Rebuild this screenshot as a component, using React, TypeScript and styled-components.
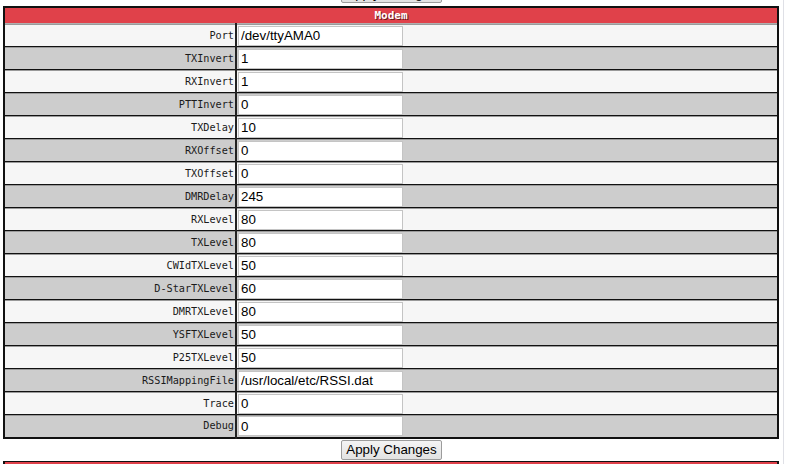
import React from 'react';
import styled, { createGlobalStyle } from 'styled-components';

const GlobalStyle = createGlobalStyle`
    html, body {
        margin: 0;
        padding: 0;
        background: #ffffff;
        overflow: hidden;
    }
`;

const Page = styled.div`
    width: 784px;
    height: 464px;
    border-right: 1px solid #dfe0e6;
    box-sizing: border-box;
    padding-left: 3px;
    overflow: hidden;
`;

const ButtonRow = styled.div<{ $top?: boolean }>`
    width: 776px;
    display: flex;
    justify-content: center;
    margin-top: ${p => (p.$top ? '-17px' : '1px')};
    margin-bottom: ${p => (p.$top ? '3px' : '0')};
`;

const Button = styled.button`
    font-family: "Liberation Sans", Arial, sans-serif;
    font-size: 13.33px;
    color: #000;
    height: 20px;
    width: 101px;
    padding: 0;
    white-space: nowrap;
    background: linear-gradient(#f4f4f4, #e2e2e2);
    border: 1px solid #9c9c9c;
    border-radius: 2px;
    box-sizing: border-box;
    margin-left: 1px;
`;

const Table = styled.table`
    width: 776px;
    border-collapse: collapse;
    border: 2px solid #111;
    font-family: "DejaVu Sans Mono", "Liberation Mono", monospace;
    font-size: 10.2px;
`;

const HeadCell = styled.th`
    background: #e0414a;
    color: #fff;
    font-weight: bold;
    height: 15px;
    padding: 0;
    text-align: center;
    text-shadow: 1px 1px 0 #6a1a1a;
    border-bottom: 1px solid #b0b0b0;
    font-size: 11px;
    line-height: 15px;
`;

const Row = styled.tr<{ $shade: boolean }>`
    background: ${p => (p.$shade ? '#cdcdcd' : '#f6f6f6')};
    height: 23px;
`;

const LabelCell = styled.td`
    width: 229px;
    text-align: right;
    padding: 0 1px 0 0;
    border-top: 1px solid #111;
    border-right: 2px solid #222;
    color: #1a1a1a;
    box-shadow: inset 0 1px 0 #9a9a9a;
`;

const ValueCell = styled.td`
    text-align: left;
    padding: 0 0 0 1px;
    border-top: 1px solid #111;
    box-shadow: inset 0 1px 0 #9a9a9a;
`;

const Field = styled.input`
    display: block;
    width: 165px;
    height: 20px;
    box-sizing: border-box;
    border: 1px solid #c4c4c4;
    background: #fff;
    padding: 1px 2px;
    font-family: "Liberation Sans", Arial, sans-serif;
    font-size: 13.33px;
    color: #000;
    margin: 1px 0 0 0;
`;

const NextTable = styled.div`
    width: 776px;
    box-sizing: border-box;
    height: 16px;
    margin-top: 1px;
    background: #e0414a;
    border: 2px solid #111;
    border-top-width: 1px;
    border-bottom: none;
`;

const settings: [string, string][] = [
    ['Port', '/dev/ttyAMA0'],
    ['TXInvert', '1'],
    ['RXInvert', '1'],
    ['PTTInvert', '0'],
    ['TXDelay', '10'],
    ['RXOffset', '0'],
    ['TXOffset', '0'],
    ['DMRDelay', '245'],
    ['RXLevel', '80'],
    ['TXLevel', '80'],
    ['CWIdTXLevel', '50'],
    ['D-StarTXLevel', '60'],
    ['DMRTXLevel', '80'],
    ['YSFTXLevel', '50'],
    ['P25TXLevel', '50'],
    ['RSSIMappingFile', '/usr/local/etc/RSSI.dat'],
    ['Trace', '0'],
    ['Debug', '0'],
];

function App() {
    return (
        <Page>
            <GlobalStyle />
            <ButtonRow $top>
                <Button>Apply Changes</Button>
            </ButtonRow>
            <Table>
                <thead>
                    <tr>
                        <HeadCell colSpan={2}>Modem</HeadCell>
                    </tr>
                </thead>
                <tbody>
                    {settings.map(([name, value], i) => (
                        <Row key={name} $shade={i % 2 === 1}>
                            <LabelCell>{name}</LabelCell>
                            <ValueCell>
                                <Field type="text" defaultValue={value} />
                            </ValueCell>
                        </Row>
                    ))}
                </tbody>
            </Table>
            <ButtonRow>
                <Button>Apply Changes</Button>
            </ButtonRow>
            <NextTable />
        </Page>
    );
}

export default App;
